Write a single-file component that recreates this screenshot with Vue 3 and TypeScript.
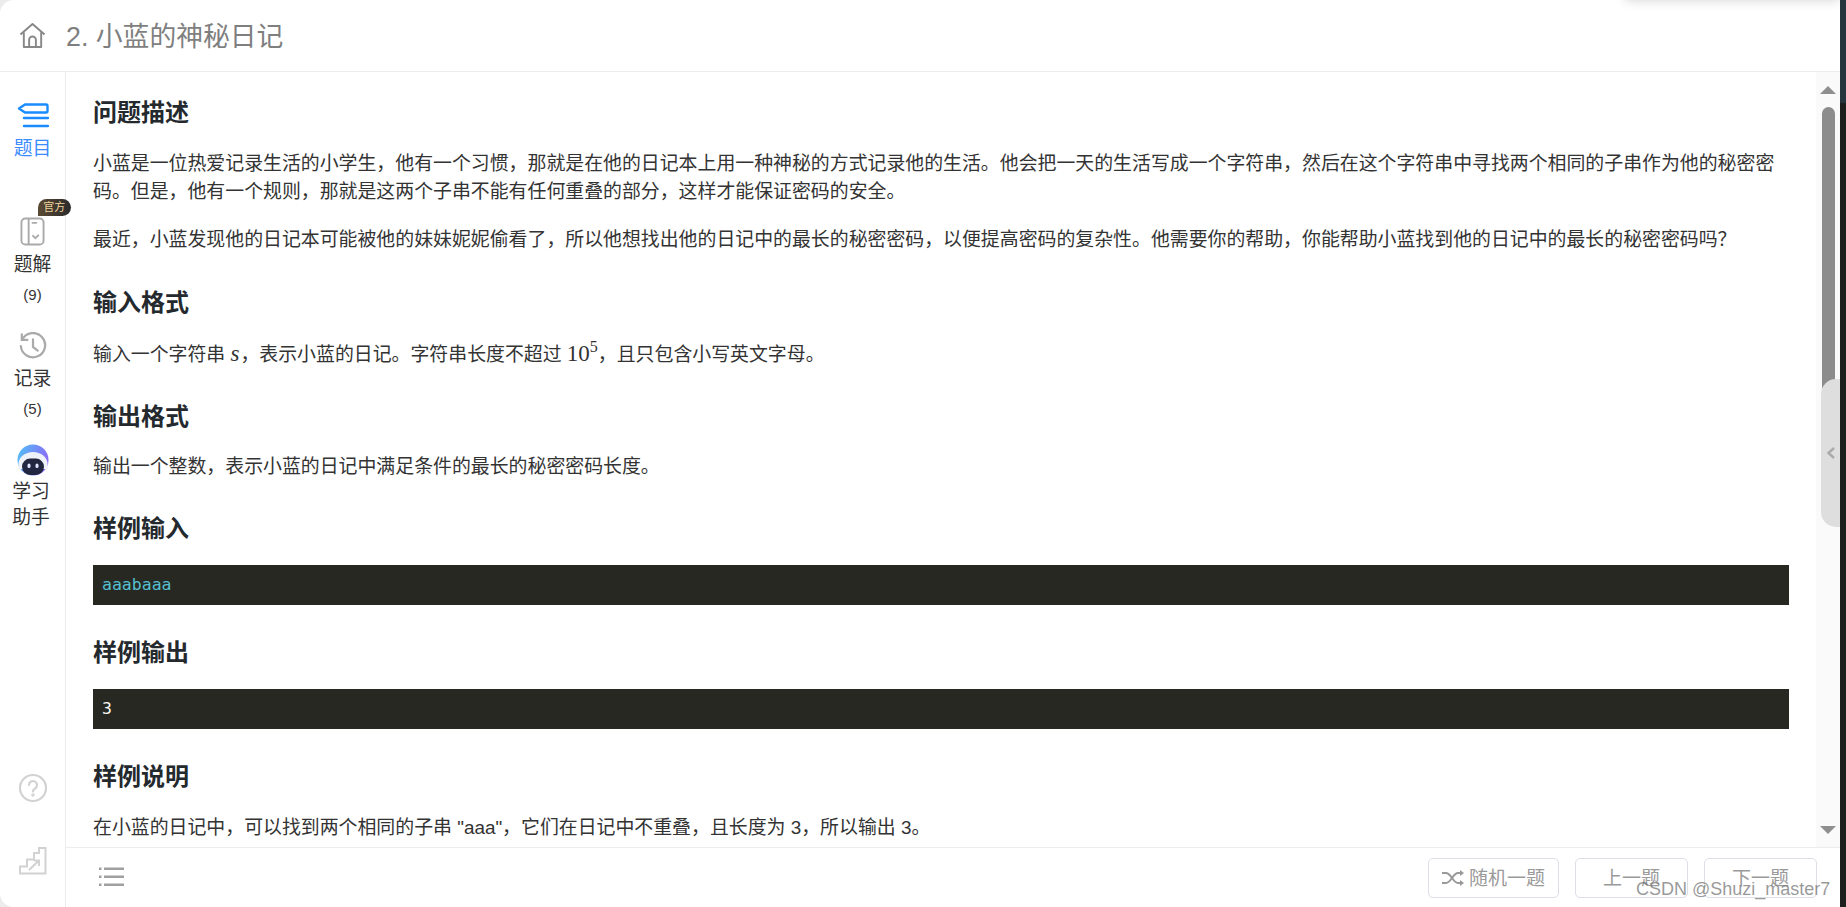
<template>
  <div class="app-shell">
    <div class="top-popup"></div>
    <header class="top-bar">
      <svg class="home-icon" viewBox="0 0 28 28" fill="none" stroke="#888" stroke-width="2" stroke-linejoin="round">
        <path d="M1.500 13 14 2 26.500 13" />
        <path d="M5 10.500v15.500h18V10.500" />
        <path d="M10.500 26V18.500a3.500 3.500 0 0 1 7 0V26" />
      </svg>
      <h1>2. 小蓝的神秘日记</h1>
    </header>

    <div class="body-row">
      <nav class="side-nav">
        <div class="nav-item active">
          <svg class="nav-icon" viewBox="0 0 32 25" fill="none" stroke="#1a8cff" stroke-width="2.400" stroke-linecap="round" stroke-linejoin="round">
            <path d="M29 1.500H8L2 5.500l6 4h21q1.500 0 1.500-1.500V3q0-1.500-1.500-1.500" />
            <path d="M7 15h24M7 23h24" />
          </svg>
          <span class="nav-label">题目</span>
        </div>
        <div class="nav-item solution">
          <span class="badge">官方</span>
          <svg class="nav-icon" viewBox="0 0 26 30" fill="none" stroke="#aaa" stroke-width="2">
            <rect x="1.500" y="1.500" width="23" height="27" rx="4" />
            <path d="M9 2v26" />
            <path d="M13 6h4M13.500 19.500l2.500 2.500 3-3" stroke-linecap="round" />
          </svg>
          <span class="nav-label">题解</span>
          <span class="nav-count">(9)</span>
        </div>
        <div class="nav-item history">
          <svg class="nav-icon" viewBox="0 0 30 30" fill="none" stroke="#aaa" stroke-width="2.400" stroke-linecap="round">
            <path d="M3.500 8A13 13 0 1 1 2 15" />
            <path d="M3 2.500V8.500H9" />
            <path d="M15 8v8l5 4" />
          </svg>
          <span class="nav-label">记录</span>
          <span class="nav-count">(5)</span>
        </div>
        <div class="nav-item helper">
          <svg class="robot" viewBox="0 0 32 32">
            <defs>
              <linearGradient id="robotSky" x1="0" y1="0" x2="1" y2="0.300">
                <stop offset="0" stop-color="#4fc3f7" />
                <stop offset="1" stop-color="#8a6cf7" />
              </linearGradient>
            </defs>
            <circle cx="16" cy="16" r="15.500" fill="url(#robotSky)" />
            <path d="M1.500 20a14.500 12 0 0 1 29 0v5H1.500z" fill="#eef1f8" />
            <rect x="5" y="14.500" width="22" height="16.500" rx="8.200" fill="#23263f" />
            <rect x="10.500" y="19.500" width="3" height="4.500" rx="1.500" fill="#dfe6ff" />
            <rect x="18.500" y="19.500" width="3" height="4.500" rx="1.500" fill="#dfe6ff" />
          </svg>
          <span class="helper-label">学习<br />助手</span>
        </div>
        <div class="nav-spacer"></div>
        <svg class="foot-icon help" viewBox="0 0 30 30" fill="none" stroke="#d2d2d2" stroke-width="2.200">
          <circle cx="15" cy="15" r="13" />
          <path d="M11 12a4 4 0 1 1 6 3.500c-1.500.8-2 1.500-2 3" stroke-linecap="round" />
          <circle cx="15" cy="22" r="0.700" />
        </svg>
        <svg class="foot-icon stairs" viewBox="0 0 30 30" fill="none" stroke="#d2d2d2" stroke-width="2">
          <path d="M2 27.500V20.500H9V13.500H16V7H21V2H27.500V27.500Z" />
          <path d="M11 24 21 14.500M15.500 14.500H21V20" />
        </svg>
      </nav>

      <div class="main-col">
        <div class="scroll-row">
          <article class="content">
            <section v-for="s in sections" :key="s.title" class="block">
              <h3>{{ s.title }}</h3>
              <template v-if="s.code">
                <pre :class="{ highlight: s.highlight }">{{ s.code }}</pre>
              </template>
              <template v-else-if="s.title === '输入格式'">
                <p>输入一个字符串 <i class="math var">s</i>，表示小蓝的日记。字符串长度不超过 <span class="math">10<sup>5</sup></span>，且只包含小写英文字母。</p>
              </template>
              <template v-else>
                <p v-for="line in s.paragraphs" :key="line">{{ line }}</p>
              </template>
            </section>
          </article>
          <div class="scroll-track">
            <span class="arrow up"></span>
            <div class="thumb"></div>
            <div class="track-fill"></div>
            <span class="arrow down"></span>
          </div>
        </div>
        <footer class="bottom-bar">
          <svg class="list-icon" viewBox="0 0 25 20" fill="#a0a0a0">
            <rect x="0" y="0.500" width="2.500" height="2.500" />
            <rect x="5" y="0.500" width="20" height="2.500" />
            <rect x="0" y="8.500" width="2.500" height="2.500" />
            <rect x="5" y="8.500" width="20" height="2.500" />
            <rect x="0" y="16.500" width="2.500" height="2.500" />
            <rect x="5" y="16.500" width="20" height="2.500" />
          </svg>
          <div class="bottom-actions">
            <button class="pager random">
              <svg class="shuffle" viewBox="0 0 22 16" fill="none" stroke="#999" stroke-width="2">
                <path d="M0 3h4c5 0 7 10 12 10h3" />
                <path d="M0 13h4c5 0 7-10 12-10h3" />
                <path d="M18 0l4 3-4 3zM18 10l4 3-4 3z" fill="#999" stroke="none" />
              </svg>
              随机一题
            </button>
            <button class="pager">上一题</button>
            <button class="pager">下一题</button>
          </div>
        </footer>
      </div>
    </div>

    <div class="drawer-handle">
      <svg viewBox="0 0 10 14" fill="none" stroke="#aaa" stroke-width="2.400"><path d="M8 2 2.500 7 8 12" /></svg>
    </div>
    <div class="watermark">CSDN @Shuzi_master7</div>
  </div>
</template>

<script setup lang="ts">
interface Section {
  title: string
  paragraphs?: string[]
  code?: string
  highlight?: boolean
}

const sections: Section[] = [
  {
    title: '问题描述',
    paragraphs: [
      '小蓝是一位热爱记录生活的小学生，他有一个习惯，那就是在他的日记本上用一种神秘的方式记录他的生活。他会把一天的生活写成一个字符串，然后在这个字符串中寻找两个相同的子串作为他的秘密密码。但是，他有一个规则，那就是这两个子串不能有任何重叠的部分，这样才能保证密码的安全。',
      '最近，小蓝发现他的日记本可能被他的妹妹妮妮偷看了，所以他想找出他的日记中的最长的秘密密码，以便提高密码的复杂性。他需要你的帮助，你能帮助小蓝找到他的日记中的最长的秘密密码吗？',
    ],
  },
  { title: '输入格式' },
  { title: '输出格式', paragraphs: ['输出一个整数，表示小蓝的日记中满足条件的最长的秘密密码长度。'] },
  { title: '样例输入', code: 'aaabaaa', highlight: true },
  { title: '样例输出', code: '3' },
  { title: '样例说明', paragraphs: ['在小蓝的日记中，可以找到两个相同的子串 "aaa"，它们在日记中不重叠，且长度为 3，所以输出 3。'] },
]
</script>

<style>
html { height: 100%; background: linear-gradient(90deg, #ececec 0 50%, transparent 50%), linear-gradient(#26343e 103px, #1e1e1e 103px); overflow: hidden; }
body { margin: 0; }
</style>

<style scoped>
.app-shell { position: relative; width: 1840px; height: 907px; background: #fff; border-radius: 14px 0 0 14px; display: flex; flex-direction: column; overflow: hidden; font-family: "Liberation Sans", "Noto Sans CJK SC", sans-serif; color: #24292e; }
.top-popup { position: absolute; top: -14px; right: 0; width: 215px; height: 14px; background: #fff; box-shadow: 0 0 12px rgba(0,0,0,0.18); }
.top-bar { height: 71px; flex: none; display: flex; align-items: center; gap: 18px; padding-left: 19px; border-bottom: 1px solid #ececec; }
.home-icon { width: 27px; height: 27px; }
.top-bar h1 { margin: 0 0 2px 2px; font-size: 26.800px; font-weight: 400; color: #7f7f7f; }
.body-row { flex: 1; min-height: 0; display: flex; }
.side-nav { width: 65px; flex: none; border-right: 1px solid #ececec; display: flex; flex-direction: column; align-items: center; color: #333; }
.nav-item { position: relative; display: flex; flex-direction: column; align-items: center; }
.nav-item.active { margin-top: 31px; color: #3b8cff; }
.nav-icon { display: block; }
.active .nav-icon { width: 32px; height: 25px; }
.nav-label { font-size: 18.800px; line-height: 26px; margin-top: 6px; }
.active .nav-label { margin-top: 8px; }
.nav-count { font-size: 15px; line-height: 20px; margin-top: 7px; }
.solution { margin-top: 55px; }
.solution .nav-icon { width: 25px; height: 29px; }
.badge { position: absolute; top: -18px; left: 24px; width: 33px; height: 17px; border-radius: 9px 9px 9px 0; background: linear-gradient(90deg, #5b4a34, #2b2a2c); color: #f0d59d; font-size: 11px; line-height: 17px; text-align: center; white-space: nowrap; }
.history { margin-top: 27px; }
.history .nav-icon { width: 28px; height: 28px; }
.helper { margin-top: 25px; }
.robot { width: 32px; height: 32px; display: block; }
.helper-label { font-size: 18.800px; line-height: 26px; margin: 3px 3px 0 0; text-align: center; }
.nav-spacer { flex: 1; }
.foot-icon { display: block; }
.help { width: 30px; height: 30px; margin-bottom: 43px; }
.stairs { width: 30px; height: 30px; margin-bottom: 31px; }
.main-col { flex: 1; min-width: 0; display: flex; flex-direction: column; }
.scroll-row { flex: 1; min-height: 0; display: flex; }
.content { flex: 1; min-width: 0; padding: 0 27px; overflow: hidden; }
.block { margin-bottom: 32px; }
.block:first-child { margin-bottom: 33px; }
.block:first-child h3 { margin-top: 25px; }
.block h3 { margin: 0; font-size: 24px; line-height: 32px; font-weight: 700; color: #24292e; }
.block p { margin: 20.500px 0 0; font-size: 18.900px; line-height: 28px; color: #333; }
.math { font-family: "Liberation Serif", serif; font-size: 23px; }
.math.var { margin-right: 1px; }
.math sup { font-size: 16px; line-height: 0; }
pre { margin: 20px 0 0; height: 40px; padding: 0 9px; background: #272822; color: #f8f8f2; font-family: "DejaVu Sans Mono", monospace; font-size: 16.500px; line-height: 40px; }
pre.highlight { color: #56bfd0; }
.scroll-track { width: 24px; flex: none; background: #fafafa; display: flex; flex-direction: column; align-items: center; }
.arrow { width: 0; height: 0; border-left: 8px solid transparent; border-right: 8px solid transparent; }
.arrow.up { margin-top: 14px; border-bottom: 8px solid #8f8f8f; }
.arrow.down { margin-bottom: 13px; border-top: 8px solid #8f8f8f; }
.thumb { width: 13px; height: 388px; margin-top: 13px; border-radius: 7px; background: #8c8c8c; }
.track-fill { flex: 1; }
.bottom-bar { height: 59px; flex: none; display: flex; align-items: center; justify-content: space-between; border-top: 1px solid #ececec; padding: 0 23px 0 33px; }
.list-icon { width: 25px; height: 20px; margin-bottom: 2px; }
.bottom-actions { display: flex; gap: 16px; }
.pager { width: 113px; height: 40px; display: flex; align-items: center; justify-content: center; gap: 5px; padding: 0 0 2px; background: #fff; border: 1px solid #dcdfe6; border-radius: 5px; color: #9a9a9a; font-family: inherit; font-size: 19px; }
.pager.random { width: 131px; }
.shuffle { width: 22px; height: 16px; margin-top: 2px; }
.drawer-handle { position: absolute; top: 379px; right: -1px; width: 20px; height: 148px; border-radius: 15px 0 0 15px; background: #dedede; display: flex; align-items: center; justify-content: center; }
.drawer-handle svg { width: 10px; height: 14px; }
.watermark { position: absolute; left: 1636px; top: 877px; font-size: 18px; line-height: 24px; color: rgba(120,120,120,0.75); white-space: nowrap; pointer-events: none; }
</style>
